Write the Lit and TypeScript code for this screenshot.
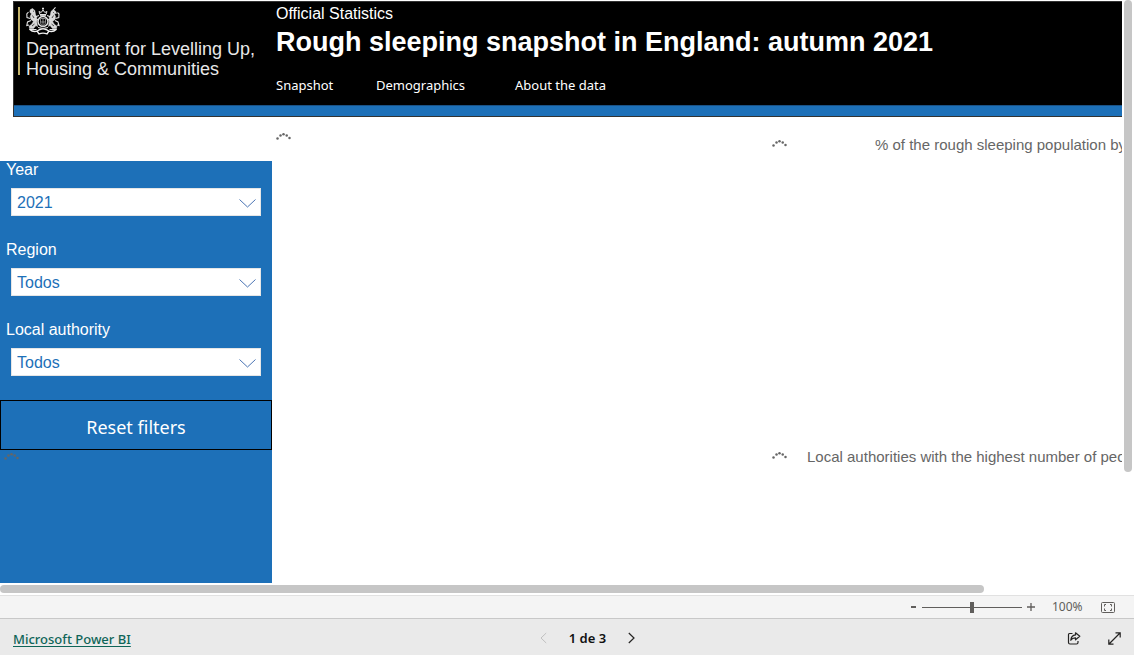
import { LitElement, html, svg, css } from "lit";
import { customElement, property, state } from "lit/decorators.js";

@customElement("loading-dots")
class LoadingDots extends LitElement {
  static styles = css`
    :host { display: block; width: 15px; height: 8px; color: #666; }
    .dots { display: block; }
  `;
  render() {
    const dots = [[1.5, 6.5], [4.5, 3.5], [7.5, 2.2], [10.7, 3.4], [13.5, 6]];
    return html`<svg class="dots" width="15" height="8" viewBox="0 0 15 8" aria-label="Loading" role="img">
      ${dots.map(([x, y]) => svg`<circle cx=${x} cy=${y} r="1.25" fill="currentColor" />`)}
    </svg>`;
  }
}

@customElement("filter-select")
class FilterSelect extends LitElement {
  @property() label = "";
  @property() value = "";

  static styles = css`
    :host { display: block; height: 80px; }
    .label { display: block; padding: 0 6px; font-size: 16px; line-height: 18px; color: #fff; }
    .box { display: grid; align-items: center; margin: 9px 11px 0; }
    .select {
      grid-area: 1 / 1; width: 100%; height: 28px; padding: 0 5px; margin: 0;
      appearance: none; border: 1px solid #e6e6e6; border-radius: 0; background: #fff;
      font: 16px "Liberation Sans", Arial, sans-serif; color: #1d70b8;
    }
    .chevron { grid-area: 1 / 1; justify-self: end; margin: 3px 5px 0 0; pointer-events: none; }
  `;
  render() {
    return html`
      <label class="label" for="field">${this.label}</label>
      <div class="box">
        <select class="select" id="field"><option>${this.value}</option></select>
        <svg class="chevron" width="17" height="9" viewBox="0 0 17 9" fill="none" stroke="#4a74b4" aria-hidden="true">
          <path d="M.5 .5 8.5 8 16.5 .5" />
        </svg>
      </div>`;
  }
}

@customElement("app-root")
class AppRoot extends LitElement {
  @state() private page = 1;
  @state() private zoom = 100;

  static styles = css`
    :host {
      display: flex; flex-direction: column; height: 100vh; overflow: hidden;
      background: #fff; font-family: "Liberation Sans", Arial, sans-serif;
    }
    *, *::before { box-sizing: border-box; }
    .viewport {
      flex: 1; min-height: 0; display: grid;
      grid-template: minmax(0, 1fr) 12px / minmax(0, 1fr) 12px;
    }
    .report { display: flex; flex-direction: column; overflow: hidden; padding-top: 1px; }
    .vtrack { padding-left: 2px; }
    .vthumb { width: 8px; height: 81%; border-radius: 4px; background: #c6c6c6; }
    .htrack { padding-top: 2px; }
    .hthumb { width: 87.7%; height: 8px; border-radius: 4px; background: #c6c6c6; }

    .banner {
      flex: none; display: grid; grid-template-columns: 262px minmax(0, 1fr);
      margin-left: 13px; border: 1px solid #333; border-right: 0;
      border-bottom: 0; background: #000; color: #fff;
    }
    .brand { align-self: start; margin: 5px 0 0 4px; padding-left: 6px; height: 68px; border-left: 2px solid #c2b26a; }
    .crest { display: block; }
    .dept { margin: 4px 0 0; font-size: 18px; line-height: 20px; white-space: nowrap; color: #e8e8e8; }
    .kicker { margin: 3px 0 0; font-size: 16px; line-height: 18px; white-space: nowrap; }
    .title { margin: 2px 0 0; font-size: 27px; line-height: 34px; font-weight: 700; white-space: nowrap; }
    .nav { display: flex; margin-top: 17px; height: 29px; font: 13px/18px "Noto Sans", sans-serif; }
    .nav a { color: #fff; text-decoration: none; white-space: nowrap; }
    .tab { width: 100px; }
    .tab.wide { width: 139px; }
    .stripe { grid-column: 1 / -1; height: 12px; background: #1d70b8; border-top: 1px solid #1a5286; border-bottom: 1px solid #333; }

    .content { flex: 1; min-height: 0; display: grid; grid-template-columns: 272px 496px minmax(0, 1fr); }
    .filters { margin-top: 44px; background: #1d70b8; }
    .reset {
      display: block; width: 100%; height: 50px; margin: -1px 0 0; padding: 4px 0 0; border: 1px solid #000;
      background: #1d70b8; color: #fff; font: 18px "Noto Sans", sans-serif;
    }
    .filters loading-dots { margin: 2px 0 0 4px; }
    .map { padding: 15px 4px; }
    .charts { display: flex; flex-direction: column; padding-top: 19px; overflow: hidden; }
    .chart { flex: none; height: 312px; display: flex; padding-left: 4px; }
    .chart loading-dots { flex: none; margin-top: 3px; }
    .caption { margin: 0; font-size: 15px; line-height: 18px; font-weight: 400; color: #666; white-space: nowrap; }
    .caption.rate { padding-left: 88px; }
    .caption.top { padding-left: 20px; }

    .zoombar {
      flex: none; display: flex; align-items: center; justify-content: flex-end; height: 23px;
      padding-right: 19px; border-top: 1px solid #e1e1e1; background: #f4f4f4;
      color: #605e5c; font: 12px/16px "Noto Sans", sans-serif;
    }
    button { font-family: inherit; }
    .icon { display: grid; place-items: center; padding: 0; border: 0; background: none; color: #252423; }
    .step { width: 18px; height: 20px; color: #605e5c; }
    .range { appearance: none; width: 100px; height: 12px; margin: 0; background: linear-gradient(#605e5c, #605e5c) center / 100% 1px no-repeat; }
    .range::-webkit-slider-thumb { appearance: none; width: 4px; height: 11px; background: #605e5c; }
    .percent { width: 30px; margin: 0 8px 0 12px; }
    .fit { margin-left: 11px; color: #605e5c; }

    .footer {
      flex: none; display: flex; align-items: center; justify-content: space-between; height: 37px;
      padding-left: 13px; border-top: 1px solid #c8c8c8; background: #eaeaea;
      font: 500 13px/18px "Noto Sans", sans-serif; color: #111;
    }
    .product { margin-top: 3px; color: #0f6558; text-underline-offset: 2px; }
    .pager { display: flex; align-items: center; gap: 9px; padding-top: 2px; font-weight: 600; }
    .pager .icon { width: 32px; height: 32px; }
    .pager .icon:disabled { color: #c0c0c0; }
    .actions { display: flex; padding-left: 10px; }
    .actions .icon { width: 40px; height: 36px; padding-top: 3px; }
  `;

  private crest() {
    return html`<svg class="crest" width="34" height="28" viewBox="0 0 34 28" fill="none" stroke="#e4e4e4" role="img" aria-label="Royal coat of arms">
      <circle cx="17" cy="14.5" r="5" stroke-width="1.5" />
      <path d="M14.5 11.5h5v4q0 2.5-2.5 3.8-2.5-1.3-2.5-3.8zM17 11.5v7.5M14.5 15h5" stroke="#a8a8a8" stroke-width=".8" />
      <path d="M14 7.5l-1-3 2.2 1 1.8-2.5 1.8 2.5 2.2-1-1 3zM17 3V.5M16 1.5h2M14 8.7h6" stroke-width="1" />
      <path d="M10.8 10.5 9.5 7.5 8.8 3.5 6.5 1.5 4.2 2.8 3.8 5.2 5.5 6.8 4.2 9.5 5 12.5 7.5 14.5 5.5 17.5 3.2 19 3.5 21.5 7.5 21.5 10 18.5 11.5 19.5 10.8 15.5z" fill="#d8d8d8" stroke-width=".5" />
      <path d="M4.2 11.5 1 10.5.8 7 2.5 5M5 13.5 1.5 15 .8 18.5 3 18M9 10l4-1.5M9 13.5l3-1M3.5 22.5h7" stroke-width="1.1" />
      <path d="M7 4.2h1M6.5 8.5 8 11M6 19l2.5-2" stroke="#222" stroke-width=".8" />
      <path d="M23.2 10.5 24.5 7.5 25 4.5 27.2 2.5 29.8 4.5 30.5 6.5 28.2 6.5 29.5 9.5 29 12.5 26.5 14.5 28.5 17.5 30.8 19 30.5 21.5 26.5 21.5 24 18.5 22.5 19.5 23.2 15.5z" fill="#d8d8d8" stroke-width=".5" />
      <path d="M27.2 3 29.5.3M29.5 11.5 32.8 10.5 33 7 31.5 5.5M29 13.5 32 15 33 18.5 31 18M25 10l-4-1.5M25 13.5l-3-1M23.5 22.5h7" stroke-width="1.1" />
      <path d="M27 5.5h.8M27.5 8.5 26 11M28 19l-2.5-2" stroke="#222" stroke-width=".8" />
      <path d="M3.5 22.2q4 3.6 8 1.6l2.5-1.3q3-1.2 6 0l2.5 1.3q4 2 8-1.6M11 24l2 2.8q4-1.4 8 0l2-2.8" stroke="#f0f0f0" stroke-width="1.4" />
      <path d="M12 20.5q5 2 10 0" stroke-width="1" />
    </svg>`;
  }

  render() {
    return html`
      <div class="viewport">
        <main class="report">
          <header class="banner">
            <div class="brand">
              ${this.crest()}
              <p class="dept">Department for Levelling Up,<br />Housing &amp; Communities</p>
            </div>
            <div>
              <p class="kicker">Official Statistics</p>
              <h1 class="title">Rough sleeping snapshot in England: autumn 2021</h1>
              <nav class="nav">
                <a class="tab" href="#snapshot">Snapshot</a>
                <a class="tab wide" href="#demographics">Demographics</a>
                <a href="#about">About the data</a>
              </nav>
            </div>
            <div class="stripe"></div>
          </header>
          <div class="content">
            <aside class="filters">
              <filter-select label="Year" value="2021"></filter-select>
              <filter-select label="Region" value="Todos"></filter-select>
              <filter-select label="Local authority" value="Todos"></filter-select>
              <button class="reset" type="button">Reset filters</button>
              <loading-dots></loading-dots>
            </aside>
            <section class="map"><loading-dots></loading-dots></section>
            <div class="charts">
              <section class="chart">
                <loading-dots></loading-dots>
                <h2 class="caption rate">% of the rough sleeping population by</h2>
              </section>
              <section class="chart">
                <loading-dots></loading-dots>
                <h2 class="caption top">Local authorities with the highest number of people</h2>
              </section>
            </div>
          </div>
        </main>
        <div class="vtrack"><div class="vthumb"></div></div>
        <div class="htrack"><div class="hthumb"></div></div>
      </div>
      <div class="zoombar">
        <button class="icon step" type="button" aria-label="Zoom out" @click=${() => (this.zoom = Math.max(10, this.zoom - 10))}>
          <svg width="8" height="8" viewBox="0 0 8 8" stroke="currentColor" stroke-width="2"><path d="M2 4h5" /></svg>
        </button>
        <input class="range" type="range" min="0" max="200" aria-label="Zoom" .value=${String(this.zoom)}
          @input=${(e: Event) => (this.zoom = Number((e.target as HTMLInputElement).value))} />
        <button class="icon step" type="button" aria-label="Zoom in" @click=${() => (this.zoom = Math.min(200, this.zoom + 10))}>
          <svg width="8" height="8" viewBox="0 0 8 8" stroke="currentColor" stroke-width="1.3"><path d="M0 4h8M4 0v8" /></svg>
        </button>
        <span class="percent">${this.zoom}%</span>
        <button class="icon fit" type="button" aria-label="Fit to page">
          <svg width="14" height="11" viewBox="0 0 14 11" fill="none" stroke="currentColor">
            <rect x=".5" y=".5" width="13" height="10" rx="1" />
            <path d="M5 2.500H3.500V4.500M3.500 6.500V8.500H5M9 2.500H10.500V4.500M10.500 6.500V8.500H9" />
          </svg>
        </button>
      </div>
      <footer class="footer">
        <a class="product" href="#powerbi">Microsoft Power BI</a>
        <div class="pager">
          <button class="icon" type="button" aria-label="Previous page" ?disabled=${this.page === 1} @click=${() => this.page--}>
            <svg width="7" height="12" viewBox="0 0 7 12" fill="none" stroke="currentColor"><path d="M6.2 1 1 6l5.2 5" /></svg>
          </button>
          <span>${this.page} de 3</span>
          <button class="icon" type="button" aria-label="Next page" ?disabled=${this.page === 3} @click=${() => this.page++}>
            <svg width="7" height="12" viewBox="0 0 7 12" fill="none" stroke="currentColor" stroke-width="1.2"><path d="M.8 1 6 6 .8 11" /></svg>
          </button>
        </div>
        <div class="actions">
          <button class="icon" type="button" aria-label="Share">
            <svg width="14" height="13" viewBox="0 0 14 13" fill="none" stroke="currentColor" stroke-width="1.2">
              <path d="M5.500 1.500H2.500Q1.500 1.500 1.500 3v7.500Q1.500 12 3 12H9.500Q11 12 11 10.500V9" />
              <path d="M8.500 .8 12.800 4.300 8.500 7.800V5.800Q5.500 5.600 3.800 8.300 4.200 3.500 8.500 2.900z" stroke-linejoin="round" />
            </svg>
          </button>
          <button class="icon" type="button" aria-label="Full screen">
            <svg width="13" height="13" viewBox="0 0 13 13" fill="none" stroke="currentColor" stroke-width="1.2">
              <path d="M1 12 12 1M7.500 .8H12.200V5.500M.8 7.500V12.200H5.500" />
            </svg>
          </button>
        </div>
      </footer>`;
  }
}
